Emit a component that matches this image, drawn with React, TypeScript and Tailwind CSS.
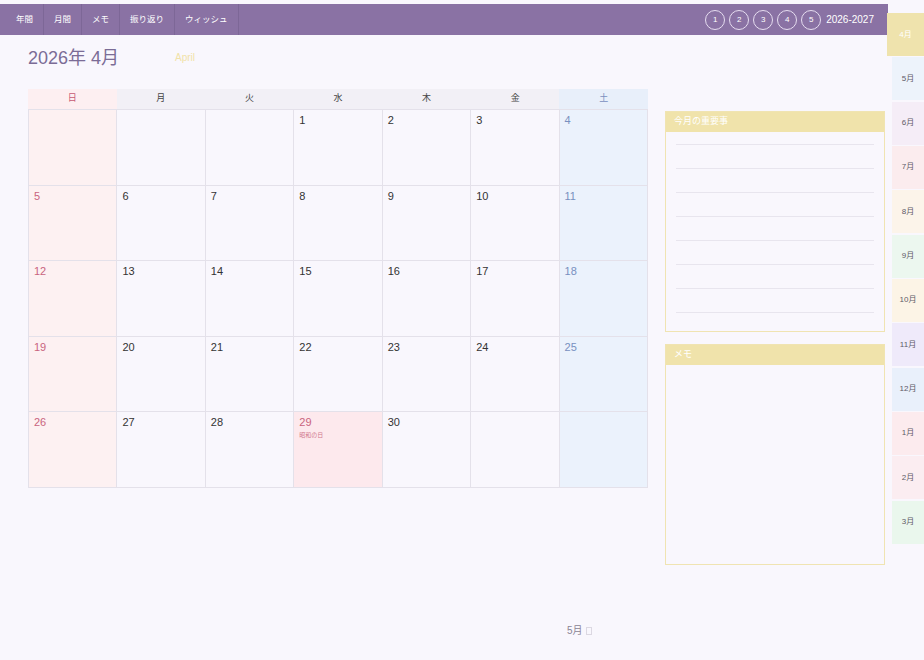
import React from "react";

const navItems = ["年間", "月間", "メモ", "振り返り", "ウィッシュ"];

const monthTabs = [
  { label: "4月", bg: "bg-[#efe3ad]", active: true },
  { label: "5月", bg: "bg-[#edf3fb]" },
  { label: "6月", bg: "bg-[#f5edf7]" },
  { label: "7月", bg: "bg-[#fbecee]" },
  { label: "8月", bg: "bg-[#fcf4ea]" },
  { label: "9月", bg: "bg-[#ecf7ef]" },
  { label: "10月", bg: "bg-[#fcf4e6]" },
  { label: "11月", bg: "bg-[#efeafa]" },
  { label: "12月", bg: "bg-[#e9f0fb]" },
  { label: "1月", bg: "bg-[#fcebee]" },
  { label: "2月", bg: "bg-[#fbedf1]" },
  { label: "3月", bg: "bg-[#eaf7ed]" },
];

const weekdays = ["日", "月", "火", "水", "木", "金", "土"];

const weeks: (number | null)[][] = [
  [null, null, null, 1, 2, 3, 4],
  [5, 6, 7, 8, 9, 10, 11],
  [12, 13, 14, 15, 16, 17, 18],
  [19, 20, 21, 22, 23, 24, 25],
  [26, 27, 28, 29, 30, null, null],
];

const holidays: Record<number, string> = { 29: "昭和の日" };

function TopBar() {
  return (
    <div className="flex h-[31px] items-center bg-[#8a72a4] pr-[14px]">
      <div className="flex h-full">
        {navItems.map((item, i) => (
          <div
            key={item}
            className={
              "flex h-full items-center border-r border-[#7d6797] pr-[10px] text-[8.5px] text-white " +
              (i === 0 ? "pl-[16px]" : "pl-[10px]")
            }
          >
            {item}
          </div>
        ))}
      </div>
      <div className="ml-auto flex items-center gap-[4px]">
        {[1, 2, 3, 4, 5].map((n) => (
          <div
            key={n}
            className="flex h-[20px] w-[20px] items-center justify-center rounded-full border border-[#e6ddf0] text-[8px] text-white"
          >
            {n}
          </div>
        ))}
        <span className="ml-[1px] text-[10px] text-white">2026-2027</span>
      </div>
    </div>
  );
}

function Calendar() {
  return (
    <div className="w-[620px]">
      <div className="grid h-[21px] grid-cols-7 border-b border-[#e4e1ea] text-[9px]">
        {weekdays.map((d, i) => (
          <div
            key={d}
            className={
              "flex items-center justify-center " +
              (i === 0
                ? "bg-[#fdeff1] text-[#c65a74]"
                : i === 6
                ? "bg-[#e8effa] text-[#7a8fbf]"
                : "bg-[#f2f0f6] text-[#444]")
            }
          >
            {d}
          </div>
        ))}
      </div>
      <div className="border-l border-[#e4e1ea]">
        {weeks.map((week, wi) => (
          <div key={wi} className="grid h-[75.6px] grid-cols-7">
            {week.map((day, di) => {
              const holiday = day !== null ? holidays[day] : undefined;
              const bg = holiday
                ? "bg-[#fde9ed]"
                : di === 0
                ? "bg-[#fdf1f2]"
                : di === 6
                ? "bg-[#ebf2fc]"
                : "";
              const color =
                di === 0 || holiday
                  ? "text-[#c9647e]"
                  : di === 6
                  ? "text-[#7890c0]"
                  : "text-[#333]";
              return (
                <div
                  key={di}
                  className={"border-r border-b border-[#e4e1ea] pl-[5px] pt-[3px] " + bg}
                >
                  {day !== null && (
                    <div className={"text-[11px] leading-[14px] " + color}>{day}</div>
                  )}
                  {holiday && (
                    <div className="mt-[2px] text-[6px] leading-[8px] text-[#d0758a]">
                      {holiday}
                    </div>
                  )}
                </div>
              );
            })}
          </div>
        ))}
      </div>
    </div>
  );
}

function Panel({ title, lines = 0 }: { title: string; lines?: number }) {
  return (
    <div className="flex h-[221px] flex-col border border-[#f0e4b2] bg-[#f9f7fd]">
      <div className="flex h-[20px] shrink-0 items-center bg-[#f0e3ab] pl-[8px] text-[9px] text-white">
        {title}
      </div>
      {lines > 0 && (
        <div className="px-[10px] pt-[12px]">
          {Array.from({ length: lines }).map((_, i) => (
            <div key={i} className="h-[24px] border-t border-[#e8e5ee]" />
          ))}
        </div>
      )}
    </div>
  );
}

export default function App() {
  return (
    <div className="flex h-[660px] w-[924px] overflow-hidden bg-[#f9f7fd] font-[family-name:'Liberation_Sans','Noto_Sans_CJK_JP',sans-serif]">
      <div className="flex w-[888px] flex-col pt-[4px]">
        <TopBar />

        <div className="flex h-[54px] items-start pl-[28px] pt-[12px]">
          <h1 className="text-[18px] leading-[22px] text-[#7b6c96]">2026年 4月</h1>
          <span className="ml-[56px] text-[10px] leading-[22px] text-[#f1e2a8]">April</span>
        </div>

        <div className="flex pl-[28px]">
          <Calendar />
          <div className="ml-[17px] flex w-[220px] flex-col gap-[12px] pt-[22px]">
            <Panel title="今月の重要事" lines={8} />
            <Panel title="メモ" />
          </div>
        </div>

        <div className="mt-[58px] flex items-center pl-[567px] text-[10px] leading-[16px] text-[#8a8494]">
          <span>5月</span>
          <span className="ml-[3px] inline-block h-[8px] w-[6px] border border-[#dcd8e2]" />
        </div>
      </div>

      <div className="flex w-[36px] flex-col items-end gap-[1.33px] pt-[13px]">
        {monthTabs.map((t) => (
          <div
            key={t.label}
            className={
              "flex h-[43px] shrink-0 items-center justify-center text-[8px] " +
              t.bg +
              (t.active ? " -ml-[1px] w-[37px] text-white" : " w-[32px] text-[#5d5a66]")
            }
          >
            {t.label}
          </div>
        ))}
      </div>
    </div>
  );
}
